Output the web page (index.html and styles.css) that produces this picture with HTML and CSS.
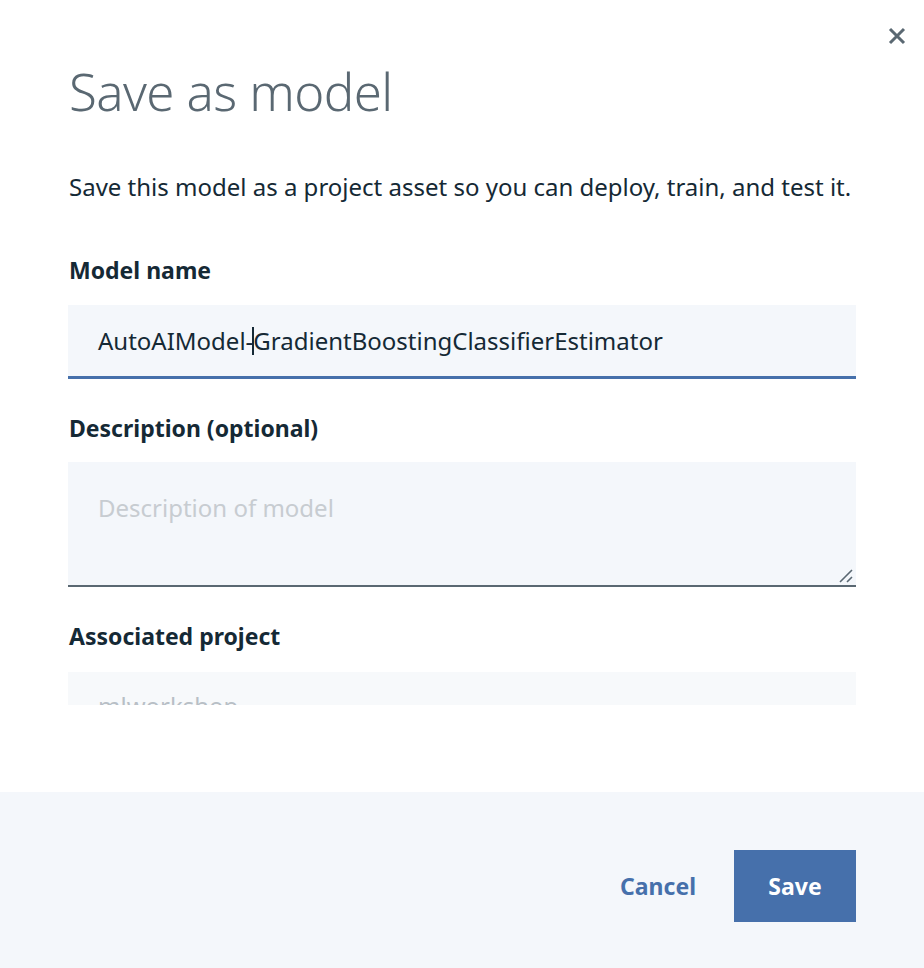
FILE: index.html
```html
<!DOCTYPE html>
<html lang="en">
<head>
<meta charset="utf-8">
<title>Save as model</title>
<link rel="stylesheet" href="styles.css">
</head>
<body>
<div class="modal">
  <button class="close" aria-label="Close">
    <svg width="18" height="18" viewBox="0 0 18 18"><path d="M2 2 L16 16 M16 2 L2 16" stroke="#5a6872" stroke-width="3" fill="none"/></svg>
  </button>
  <div class="body">
    <h1 class="title">Save as model</h1>
    <p class="intro">Save this model as a project asset so you can deploy, train, and test it.</p>
    <div class="field">
      <label class="label">Model name</label>
      <div class="input"><span>AutoAIModel-</span><span class="caret"></span><span>GradientBoostingClassifierEstimator</span></div>
    </div>
    <div class="field">
      <label class="label">Description (optional)</label>
      <div class="textarea"><span class="placeholder">Description of model</span>
        <svg class="grip" width="16" height="16" viewBox="0 0 16 16"><path d="M2 15 L14 3 M9 15 L14 10" stroke="#5a6872" stroke-width="1.6" fill="none"/></svg>
      </div>
    </div>
    <div class="field last">
      <label class="label">Associated project</label>
      <div class="select"><span>mlworkshop</span></div>
    </div>
  </div>
  <div class="footer">
    <button class="btn-cancel">Cancel</button>
    <button class="btn-save">Save</button>
  </div>
</div>
</body>
</html>
```

FILE: styles.css
```css
* { box-sizing: border-box; }
html, body { margin: 0; padding: 0; background: #ffffff; }
body { font-family: "Noto Sans", "Open Sans", sans-serif; color: #152935; }

.modal {
  position: relative;
  width: 924px;
  height: 968px;
  display: flex;
  flex-direction: column;
}

.close {
  position: absolute;
  top: 27px;
  right: 18px;
  width: 18px;
  height: 18px;
  padding: 0;
  border: 0;
  background: none;
  display: flex;
}

.body {
  height: 705px;
  overflow: hidden;
  padding: 59px 68px 0 69px;
}

.title {
  margin: 0;
  font-weight: 300;
  font-size: 51px;
  line-height: 64px;
  color: #5a6872;
  letter-spacing: -0.6px;
}

.intro {
  margin: 48px 0 0;
  font-size: 24px;
  line-height: 32px;
  color: #152935;
}

.field { margin-top: 51px; }
.field + .field { margin-top: 33px; }

.label {
  display: block;
  font-size: 23px;
  font-weight: 700;
  line-height: 32px;
  color: #152935;
}

.input {
  margin: 19px 0 0 -1px;
  height: 74px;
  background: #f4f7fb;
  border-bottom: 3px solid #4670ab;
  padding: 0 30px;
  display: flex;
  align-items: center;
  font-size: 24px;
  color: #152935;
}
.caret {
  display: inline-block;
  width: 2px;
  height: 28px;
  background: #152935;
  margin: 0 -1px;
}

.textarea {
  position: relative;
  margin: 18px 0 0 -1px;
  height: 125px;
  background: #f4f7fb;
  border-bottom: 2px solid #5a6872;
  padding: 30px 30px 0;
  font-size: 24px;
  line-height: 32px;
}
.placeholder { color: #c7ccd1; }
.grip {
  position: absolute;
  right: 2px;
  bottom: 2px;
}

.select {
  margin: 20px 0 0 -1px;
  height: 74px;
  background: #f7f9fb;
  padding: 18px 30px 0;
  font-size: 24px;
  line-height: 32px;
  color: #b8bfc6;
}

.footer {
  margin-top: 87px;
  flex: 1;
  background: #f4f7fb;
  display: flex;
  justify-content: flex-end;
  align-items: flex-start;
  padding: 58px 68px 0 0;
  gap: 38px;
}

.btn-cancel, .btn-save {
  font-family: inherit;
  font-size: 23px;
  font-weight: 700;
  border: 0;
  cursor: pointer;
}
.btn-cancel {
  height: 72px;
  background: none;
  color: #4670ab;
  padding: 0;
}
.btn-save {
  width: 122px;
  height: 72px;
  background: #4670ab;
  color: #ffffff;
  padding: 0;
}
```
